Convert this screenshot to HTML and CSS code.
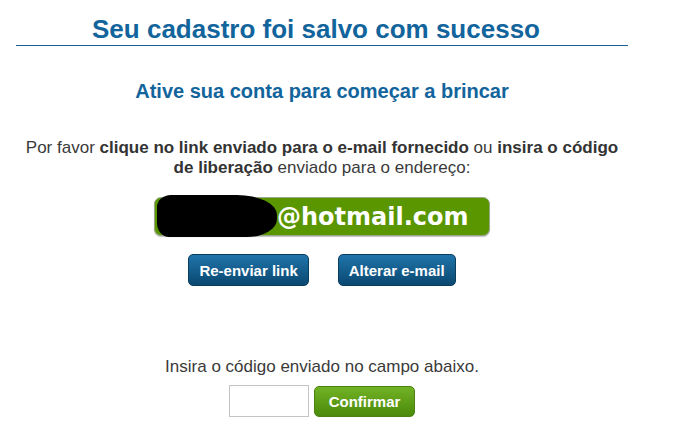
FILE: index.html
```html
<!DOCTYPE html>
<html lang="pt-br">
<head>
    <meta charset="UTF-8">
    <meta name="viewport" content="width=device-width, initial-scale=1.0">
    <title>Cadastro salvo</title>
    <link rel="stylesheet" href="styles.css">
</head>
<body>

    <div class="page">
        <h1 class="title">Seu cadastro foi salvo com sucesso</h1>

        <h2 class="subtitle">Ative sua conta para começar a brincar</h2>

        <p class="intro">Por favor <b>clique no link enviado para o e-mail fornecido</b> ou <b>insira o código de liberação</b> enviado para o endereço:</p>

        <div class="email-row">
            <div class="email-box"><span class="hidden-user"></span>@hotmail.com</div>
        </div>

        <div class="actions">
            <button class="btn-blue">Re-enviar link</button>
            <button class="btn-blue">Alterar e-mail</button>
        </div>

        <p class="code-label">Insira o código enviado no campo abaixo.</p>
        <div class="code-row">
            <input type="text" class="code-input">
            <button class="btn-green">Confirmar</button>
        </div>
    </div>

</body>
</html>
```

FILE: styles.css
```css
body {
    margin: 0;
    font-family: 'Liberation Sans', Arial, sans-serif;
    background: #fff;
    color: #3a3a3a;
}
.page {
    width: 612px;
    margin-left: 16px;
    text-align: center;
}
.title {
    margin: 0;
    padding: 14px 12px 1px 0;
    font-size: 26px;
    line-height: 30px;
    color: #12649c;
    border-bottom: 1px solid #1b5f92;
}
.subtitle {
    margin: 33px 0 0;
    font-size: 20px;
    line-height: 24px;
    color: #12649c;
}
.intro {
    margin: 35px 0 0;
    font-size: 17px;
    line-height: 20px;
}
.intro b { color: #333; }
.email-row {
    margin-top: 19px;
    display: flex;
    justify-content: center;
}
.email-box {
    width: 336px;
    height: 39px;
    box-sizing: border-box;
    display: flex;
    align-items: center;
    background: #5a9600;
    border: 1px solid #9aa88a;
    border-radius: 7px;
    box-shadow: 0 1px 1px rgba(0, 0, 0, 0.25);
    color: #fff;
    font-family: 'DejaVu Sans', Verdana, sans-serif;
    font-weight: bold;
    font-size: 24px;
}
/* tarja preta sobre o nome do usuário */
.hidden-user {
    display: block;
    width: 120px;
    height: 42px;
    margin: -2px 0 0 2px;
    background: #000;
    border-radius: 14px 40px 30px 12px / 12px 20px 18px 14px;
}
.actions {
    margin-top: 18px;
    display: flex;
    justify-content: center;
    gap: 29px;
}
.btn-blue {
    height: 32px;
    padding: 0 10px;
    border: 1px solid #0a3d5e;
    border-radius: 5px;
    background: linear-gradient(#1f74aa, #0a4870);
    color: #fff;
    font-family: 'Liberation Sans', Arial, sans-serif;
    font-weight: bold;
    font-size: 15px;
    cursor: pointer;
}
.code-label {
    margin: 71px 0 0;
    font-size: 17px;
    line-height: 19px;
}
.code-row {
    margin-top: 9px;
    display: flex;
    justify-content: center;
    align-items: center;
    gap: 5px;
}
.code-input {
    width: 80px;
    height: 32px;
    box-sizing: border-box;
    border: 1px solid #c4c4c4;
    margin: 0;
}
.btn-green {
    width: 101px;
    height: 31px;
    border: 1px solid #4a8210;
    border-radius: 5px;
    background: linear-gradient(#72b224, #4b8a0c);
    color: #fff;
    font-family: 'Liberation Sans', Arial, sans-serif;
    font-weight: bold;
    font-size: 15px;
    cursor: pointer;
}
```
